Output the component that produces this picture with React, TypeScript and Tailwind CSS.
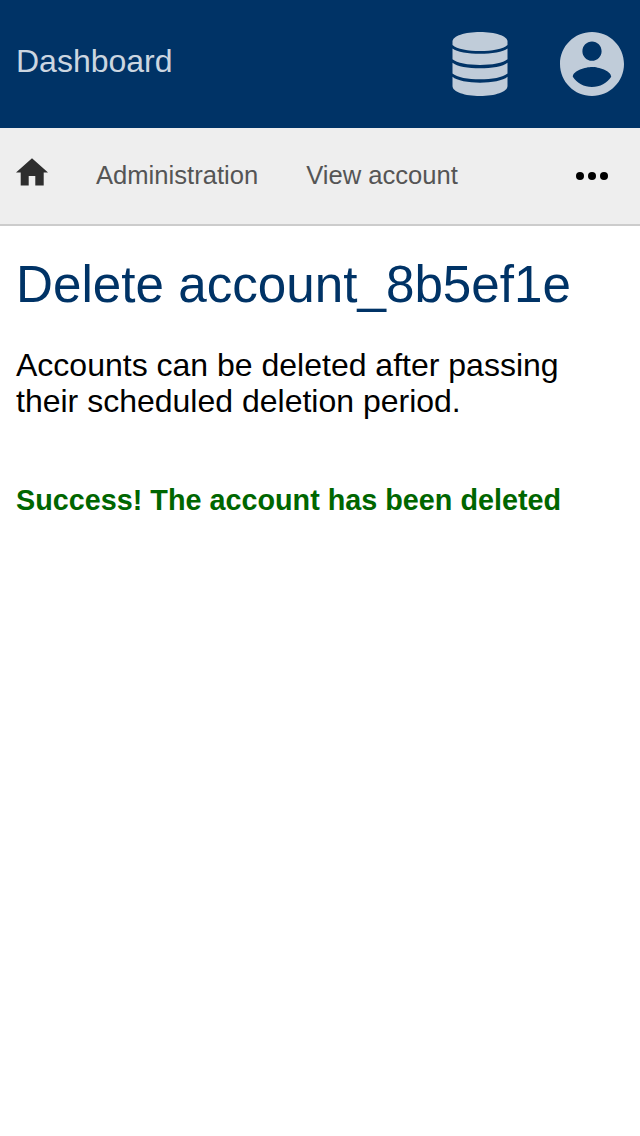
import React from "react";

function DatabaseIcon() {
  return (
    <svg viewBox="0 0 56 64" className="h-16 w-14 fill-[#c0ccd9]" aria-hidden="true">
      <path d="M28 0C43 0 55.500 4 55.500 9.500V13C47 21 9 21 0.500 13V9.500C0.500 4 13 0 28 0Z" />
      <path d="M0.500 16.500C9 23.500 47 23.500 55.500 16.500V27.300C47 34.900 9 34.900 0.500 27.300Z" />
      <path d="M0.500 30.700C9 38.200 47 38.200 55.500 30.700V41.500C47 49.300 9 49.300 0.500 41.500Z" />
      <path d="M0.500 44.800C9 52.700 47 52.700 55.500 44.800V54C55.500 60 43 64 28 64S0.500 60 0.500 54Z" />
    </svg>
  );
}

export default function App() {
  return (
    <div className="min-h-[1136px] bg-white font-['Liberation_Sans',Arial,sans-serif] text-black">
      <header className="flex h-32 items-center justify-between bg-[#003366] px-4 text-[#ccd6e0]">
        <span className="pb-1.5 text-[32px] leading-9">Dashboard</span>
        <div className="flex items-center gap-[52px]">
          <DatabaseIcon />
          <svg viewBox="2 2 20 20" className="size-16 fill-[#c0ccd9]" aria-label="Account">
            <path d="M12 2C6.48 2 2 6.48 2 12s4.48 10 10 10 10-4.48 10-10S17.52 2 12 2zm0 3c1.66 0 3 1.34 3 3s-1.34 3-3 3-3-1.34-3-3 1.34-3 3-3zm0 14.2c-2.5 0-4.71-1.28-6-3.22.03-1.99 4-3.08 6-3.08 1.99 0 5.97 1.09 6 3.08-1.29 1.94-3.5 3.22-6 3.22z" />
          </svg>
        </div>
      </header>
      <nav className="flex h-[98px] items-center border-b-2 border-[#cccccc] bg-[#eeeeee] pr-8 pl-4 text-[25.6px] text-[#555555]">
        <svg viewBox="0 0 32 28" className="mr-12 mb-2 h-7 w-8 fill-[#2e2e2e]" aria-label="Home">
          <path d="M16 0.300L32 14.600H27.700V27.600H19.300V18H12.700V27.600H4.700V14.600H0Z" />
        </svg>
        <span className="mr-12 pb-0.5">Administration</span>
        <span className="pb-0.5">View account</span>
        <svg viewBox="0 0 32 8" className="ml-auto h-2 w-8 fill-black" aria-label="More">
          <circle cx="4" cy="4" r="4" />
          <circle cx="16" cy="4" r="4" />
          <circle cx="28" cy="4" r="4" />
        </svg>
      </nav>
      <main className="px-4 pt-[29px]">
        <h1 className="text-[51.200px] leading-[60px] text-[#003366]">Delete account_8b5ef1e</h1>
        <p className="mt-8 w-[600px] text-[32px] leading-9">
          Accounts can be deleted after passing their scheduled deletion period.
        </p>
        <p className="mt-[63px] text-[28.780px] leading-9 font-bold text-[#006600]">
          Success! The account has been deleted
        </p>
      </main>
    </div>
  );
}
